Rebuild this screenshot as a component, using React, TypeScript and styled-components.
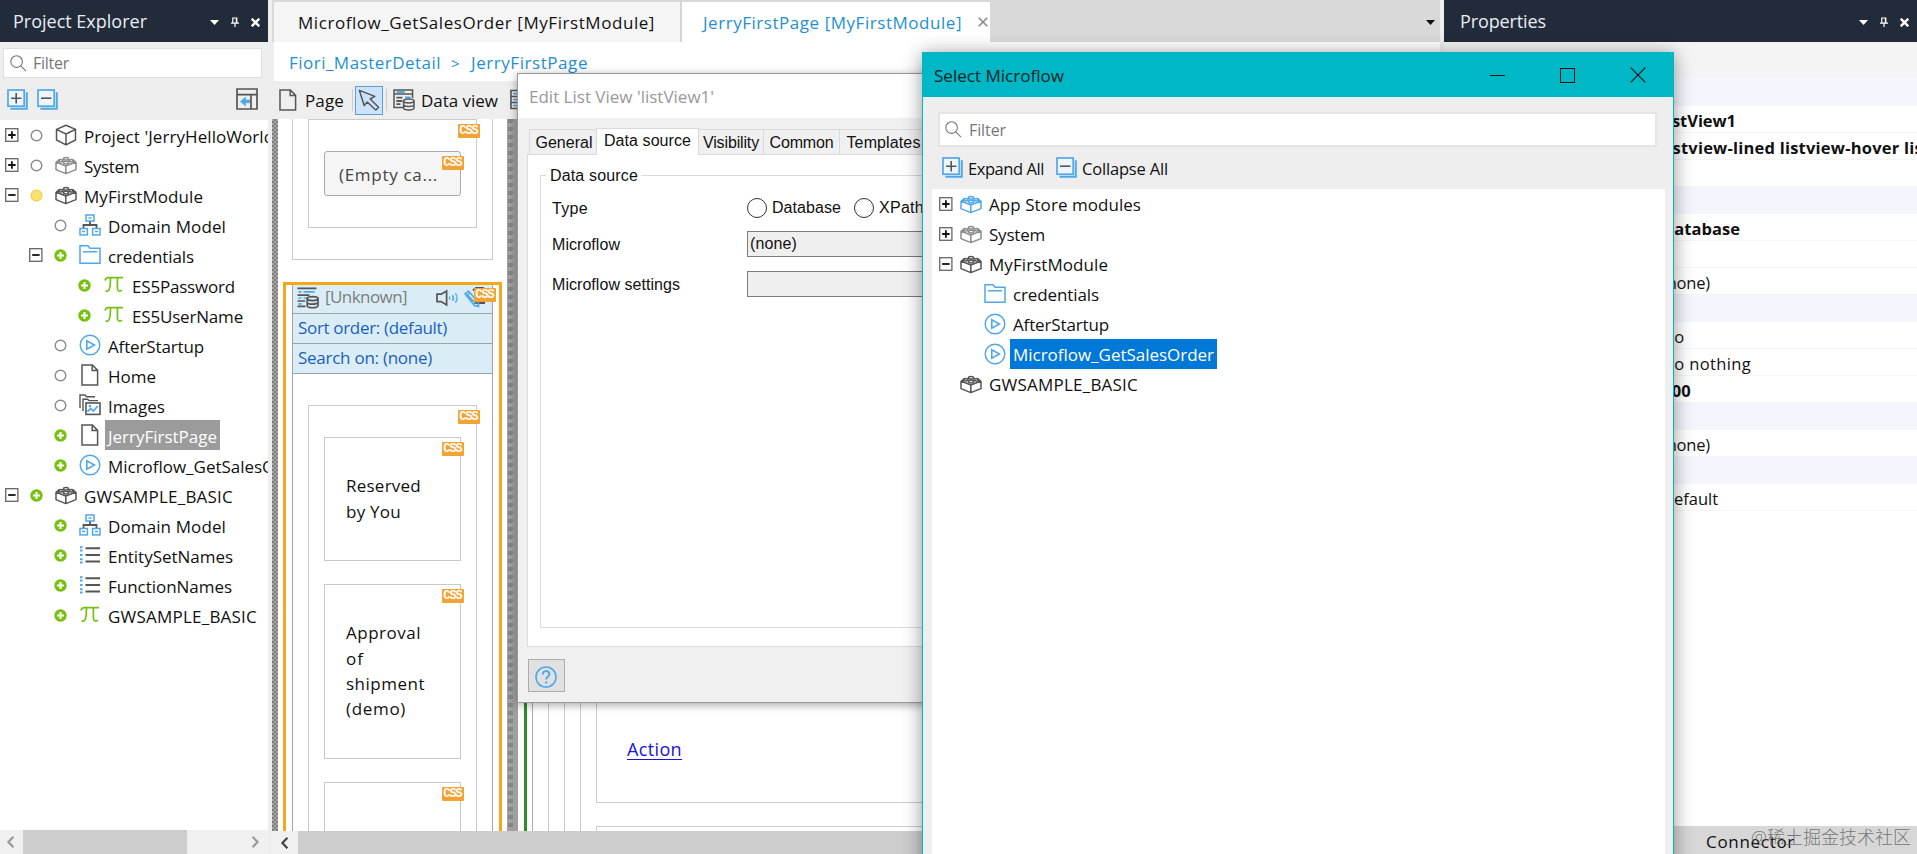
import React, { useLayoutEffect, useRef } from "react";
import styled, { createGlobalStyle, css } from "styled-components";

const UI = `"Open Sans", "Noto Sans", "Noto Sans CJK SC", sans-serif`;
const FORM = `"Liberation Sans", Arial, sans-serif`;

const C = {
  navy: "#222b3a",
  chrome: "#eeeeee",
  teal: "#00b7c5",
  blue: "#1e90d0",
  icon: "#555555",
  sky: "#4fa8e8",
  green: "#76c010",
  orange: "#f5a81c",
  select: "#0078d7",
};

const GlobalStyle = createGlobalStyle`
  html, body { margin: 0; padding: 0; overflow: hidden; }
  * { box-sizing: border-box; }
  body { font-family: ${UI}; font-size: 17px; color: #111; background: #eee; }
  svg { display: block; flex: none; }
`;

/* ---------- text ---------- */

const LabelSpan = styled.span<{ $size: number; $color?: string; $form?: boolean; $bold?: boolean; $dy?: number }>`
  display: inline-block;
  flex: none;
  justify-self: start;
  white-space: pre;
  font-family: ${(p) => (p.$form ? FORM : UI)};
  font-size: ${(p) => p.$size}px;
  font-weight: ${(p) => (p.$bold ? 700 : 400)};
  color: ${(p) => p.$color ?? "#111"};
  padding-top: ${(p) => p.$dy ?? 0}px;
`;

interface LabelProps {
  children: string;
  w?: number;
  size?: number;
  color?: string;
  form?: boolean;
  bold?: boolean;
  dy?: number;
}

/* Tracks its letters so that the label takes the width `w`. */
function Label({ children, w, size = 17, color, form, bold, dy }: LabelProps) {
  const ref = useRef<HTMLSpanElement>(null);
  useLayoutEffect(() => {
    const el = ref.current;
    if (!el || !w) return;
    el.style.letterSpacing = "0px";
    const natural = el.getBoundingClientRect().width;
    el.style.letterSpacing = `${(w - natural) / children.length}px`;
  }, [children, w, size]);
  return (
    <LabelSpan ref={ref} $size={size} $color={color} $form={form} $bold={bold} $dy={dy}>
      {children}
    </LabelSpan>
  );
}

/* ---------- icons ---------- */

const CubeIcon = () => (
  <svg width="22" height="22" viewBox="0 0 22 22" fill="none" stroke={C.icon} strokeWidth="1.5" strokeLinejoin="round">
    <path d="M11 1.2 20.5 5.4V16L11 20.8 1.5 16V5.4ZM1.5 5.4 11 10l9.5-4.6M11 10v10.8" />
  </svg>
);

const BrickIcon = ({ color = C.icon }: { color?: string }) => (
  <svg width="22" height="22" viewBox="0 0 22 22" fill="none" stroke={color} strokeWidth="1.5" strokeLinejoin="round">
    <path d="M1 8v7.6l9.8 4L21 15.6V8M1 8l9.8 4L21 8M10.8 12v7.6M1 8l4-1.8M21 8l-4-1.8" />
    <ellipse cx="11" cy="4.8" rx="2.6" ry="1.3" />
    <ellipse cx="5.6" cy="6.8" rx="2.4" ry="1.2" />
    <ellipse cx="16.4" cy="6.8" rx="2.4" ry="1.2" />
    <ellipse cx="11" cy="8.6" rx="2.6" ry="1.3" />
  </svg>
);

const DomainIcon = () => (
  <svg width="22" height="22" viewBox="0 0 22 22" fill="none" stroke={C.sky} strokeWidth="1.5">
    <rect x="7" y="1" width="8" height="6" />
    <path d="M9.5 4h3M3 17.5h3M16 17.5h3" />
    <path d="M11 7.5v3.5M4.5 14v-3h13v3" stroke={C.icon} strokeWidth="1.8" />
    <rect x="1" y="14.5" width="7.4" height="6.4" />
    <rect x="13.6" y="14.5" width="7.4" height="6.4" />
  </svg>
);

const FolderIcon = () => (
  <svg width="22" height="22" viewBox="0 0 22 22" fill="none" stroke={C.sky} strokeWidth="1.5">
    <path d="M1 19.2V1.8h8l2 2.4h10v15ZM4 7.8h14" />
  </svg>
);

const PiIcon = () => (
  <svg width="22" height="22" viewBox="0 0 22 22" fill="none" stroke={C.green} strokeWidth="1.7">
    <path d="M2 6.5C2.6 4 3.6 3.6 5.4 3.6H20M7.5 3.6c0 6.4-.4 11-1.8 12.6-.8 1-2 1.2-3.2.8M14.4 3.6v10.6c0 2.8 2.4 3.8 4.6 2" />
  </svg>
);

const FlowIcon = () => (
  <svg width="22" height="22" viewBox="0 0 22 22" fill="none" stroke={C.sky} strokeWidth="1.4">
    <circle cx="11" cy="11" r="9.8" />
    <path d="M7.8 6.8v8.4l7.6-4.2Z" strokeWidth="1.6" />
  </svg>
);

const PageIcon = () => (
  <svg width="22" height="22" viewBox="0 0 22 22" fill="none" stroke={C.icon} strokeWidth="1.5">
    <path d="M3 1h10.4L18.6 6.4V21H3ZM13.2 1v5.6h5.4" />
  </svg>
);

const ImagesIcon = () => (
  <svg width="22" height="22" viewBox="0 0 22 22" fill="none" stroke={C.icon} strokeWidth="1.4">
    <path d="M1 14V1h5l1.6 1.8H16M4 17V5.2h4.5L10 6.6h9" />
    <rect x="7" y="9" width="14" height="11.4" strokeWidth="1.6" />
    <path d="m8.5 17.5 3.3-3 2.4 2.6 4.6-5" stroke={C.sky} strokeWidth="1.7" />
    <circle cx="11" cy="12" r=".6" stroke={C.sky} />
  </svg>
);

const ListIcon = () => (
  <svg width="22" height="22" viewBox="0 0 22 22" fill="none" strokeWidth="2">
    <path d="M6.5 4.2H21M6.5 11H21M6.5 17.4H21" stroke={C.icon} />
    <path d="M1 3.2h2.6M1 6.6h2.6M1 11h2.6M1 15.2h2.6M1 18.6h2.6" stroke={C.sky} />
  </svg>
);

const SearchIcon = () => (
  <svg width="17" height="17" viewBox="0 0 17 17" fill="none" stroke="#777" strokeWidth="1.1">
    <circle cx="6.6" cy="6.6" r="5.8" />
    <path d="m10.8 10.8 5.2 5.4" />
  </svg>
);

const StackIcon = ({ minus }: { minus?: boolean }) => (
  <svg width="21" height="21" viewBox="0 0 21 21" fill="none" stroke={C.sky} strokeWidth="1.7">
    <path d="M3.4 19.8h16.4V3.2" strokeWidth="2" />
    <rect x="1" y="1" width="16.2" height="16.2" fill="#eef5fa" />
    <path d={minus ? "M4 9.2h10.4" : "M4 9.2h10.4M9.2 4v10.4"} stroke={C.icon} strokeWidth="1.6" />
  </svg>
);

const DockIcon = () => (
  <svg width="22" height="22" viewBox="0 0 22 22" fill="none" stroke={C.icon} strokeWidth="1.7">
    <path d="M1 1h20v20H1ZM1 6.6h20M15 7v14" />
    <path d="M14 13.4H8" stroke={C.sky} strokeWidth="3.4" />
    <path d="m4 13.4 5.8-5v10Z" fill={C.sky} stroke="none" />
  </svg>
);

const CursorIcon = () => (
  <svg width="22" height="22" viewBox="0 0 22 22" fill="none" stroke={C.icon} strokeWidth="1.5" strokeLinejoin="round">
    <path d="m1.4 1.4 4.8 15.2 3-3.6 8.6 8 2.8-2.8-8.4-8.2 4.6-2.6Z" />
  </svg>
);

const DataViewIcon = () => (
  <svg width="22" height="22" viewBox="0 0 22 22" fill="none" stroke={C.icon} strokeWidth="1.5">
    <path d="M10 18.4H1V1h18.6v8M1 5h18.6" />
    <path d="M3.4 8.6h6M3.4 12h6M3.4 15.2h4" strokeWidth="1.8" />
    <path d="M3.6 3h8M12 8.4h5.6" stroke={C.sky} strokeWidth="2" />
    <ellipse cx="15.8" cy="12" rx="5.2" ry="1.9" fill="#eee" />
    <path d="M10.6 12v7c0 2.6 10.4 2.6 10.4 0v-7M10.6 15.6c0 2.6 10.4 2.6 10.4 0" />
  </svg>
);

const GridIcon = () => (
  <svg width="22" height="22" viewBox="0 0 22 22" fill="none" stroke={C.icon} strokeWidth="1.6">
    <path d="M1 1.5h20v18H1ZM1 7.5h20M1 13.5h20M9 1.5v18" />
    <path d="M3 4.6h4M3 10.6h4M3 16.6h4" stroke={C.sky} />
  </svg>
);

const ListViewIcon = () => (
  <svg width="22" height="22" viewBox="0 0 22 22" fill="none" stroke={C.icon} strokeWidth="1.7">
    <path d="M.5 1.4h19M.5 8.2h12M.5 14h7.6M.5 19.4h8" />
    <path d="M1.5 4.8h3M6.6 4.8h11M1.5 11h3M6.6 11h3M1.5 16.8h3" stroke={C.sky} />
    <ellipse cx="15.6" cy="11.6" rx="5.4" ry="2" fill="#daedf7" />
    <path d="M10.2 11.6v7.2c0 2.6 10.8 2.6 10.8 0v-7.2M10.2 15.2c0 2.6 10.8 2.6 10.8 0" />
  </svg>
);

const SpeakerIcon = () => (
  <svg width="23" height="18" viewBox="0 0 23 18" fill="none" stroke={C.icon} strokeWidth="1.7">
    <path d="M1 5.2h4.2L10.6 2v14l-5.4-3.4H1Z" />
    <path d="M13.6 7.6v2.8M16.4 6.2c1.2 1.6 1.2 4 0 5.6M19.4 4.4c2 2.6 2 6.6 0 9.2" stroke={C.sky} strokeWidth="1.5" />
  </svg>
);

const PencilIcon = () => (
  <svg width="22" height="22" viewBox="0 0 22 22" fill="none" stroke={C.sky} strokeWidth="1.6">
    <path d="M9 3.4 12 1h8M10 16h11" stroke={C.icon} strokeWidth="2" />
    <path d="M1 6.8 4.4 4l9.8 11 .4 4.4-4.2-.8ZM3.8 8.2l8 8.6M1.8 9.4l3.6-3" />
  </svg>
);

const HelpIcon = () => (
  <svg width="22" height="22" viewBox="0 0 22 22" fill="none" stroke={C.sky} strokeWidth="1.6">
    <circle cx="11" cy="11" r="10" />
    <path d="M7.8 8.4c0-4.4 6.6-4.2 6.6-.4 0 2.6-3.2 2.4-3.2 5.6M11.2 15.4v2" strokeWidth="2" />
  </svg>
);

const Chevron = ({ right, color = "#999" }: { right?: boolean; color?: string }) => (
  <svg width="9" height="12" viewBox="0 0 9 12" fill="none" stroke={color} strokeWidth="2.2">
    <path d={right ? "m1.6.8 5 5.2-5 5.2" : "m7.4.8-5 5.2 5 5.2"} />
  </svg>
);

const PinIcon = () => (
  <svg width="8" height="10" viewBox="0 0 8 10" fill="none" stroke="#fff" strokeWidth="1.2">
    <path d="M1.8 6V1h4v5M0 6.2h8M4 6.2V10M5.4 1v5" />
  </svg>
);

const CaretIcon = ({ color = "#fff" }: { color?: string }) => (
  <svg width="9" height="5" viewBox="0 0 9 5">
    <path d="M0 0h9L4.5 5Z" fill={color} />
  </svg>
);

const CrossIcon = ({ size, color, weight }: { size: number; color: string; weight: number }) => (
  <svg width={size} height={size} viewBox={`0 0 ${size} ${size}`} stroke={color} strokeWidth={weight}>
    <path d={`M.7.7 ${size - 0.7} ${size - 0.7}M${size - 0.7}.7.7 ${size - 0.7}`} />
  </svg>
);

/* ---------- tree ---------- */

type Kind = "cube" | "brick" | "brickGray" | "brickBlue" | "domain" | "folder" | "pi" | "flow" | "page" | "images" | "list";

const icons: Record<Kind, React.ReactNode> = {
  cube: <CubeIcon />,
  brick: <BrickIcon />,
  brickGray: <BrickIcon color="#8c8c8c" />,
  brickBlue: <BrickIcon color={C.sky} />,
  domain: <DomainIcon />,
  folder: <FolderIcon />,
  pi: <PiIcon />,
  flow: <FlowIcon />,
  page: <PageIcon />,
  images: <ImagesIcon />,
  list: <ListIcon />,
};

interface Node {
  level: number;
  icon: Kind;
  text: string;
  w: number;
  exp?: "+" | "-";
  status?: "none" | "changed" | "added";
  selected?: boolean;
}

const TreeRow = styled.div<{ $level: number; $first: number }>`
  display: flex;
  align-items: center;
  height: 30px;
  padding-left: ${(p) => p.$first + p.$level * 24}px;
  white-space: nowrap;
`;

const ExpandSlot = styled.div<{ $wide?: boolean }>`
  width: ${(p) => (p.$wide ? 21 : 25)}px;
  flex: none;
`;

const StatusSlot = styled.div`
  width: 25px;
  flex: none;
  margin-left: -0.5px;
  margin-right: 0.5px;
`;

const NodeText = styled.div<{ $bg?: string }>`
  height: 30px;
  margin-left: 4px;
  padding: 0 3px;
  line-height: 30px;
  background: ${(p) => p.$bg ?? "transparent"};
`;

const ExpandBox = ({ mark }: { mark: "+" | "-" }) => (
  <svg width="14" height="14" viewBox="0 0 14 14" fill="#fff" stroke="#666" strokeWidth="1.3">
    <rect x=".7" y=".7" width="12.2" height="12.6" />
    <path d={mark === "+" ? "M3.2 7h7.4M6.9 3.3v7.4" : "M3.2 7h7.4"} stroke="#111" strokeWidth="1.8" />
  </svg>
);

const StatusDot = ({ kind }: { kind: "none" | "changed" | "added" }) => (
  <svg width="13" height="13" viewBox="0 0 13 13" fill="none">
    {kind === "none" && <circle cx="6.5" cy="6.5" r="5.3" stroke="#8a8a8a" strokeWidth="1.4" />}
    {kind === "changed" && <circle cx="6.5" cy="6.5" r="5.4" fill="#ffe173" stroke="#f2cf4a" strokeWidth="1.2" />}
    {kind === "added" && (
      <>
        <circle cx="6.5" cy="6.5" r="6.2" fill={C.green} />
        <path d="M3 6.5h7M6.5 3v7" stroke="#fff" strokeWidth="2.1" />
      </>
    )}
  </svg>
);

function Tree({ nodes, first, withStatus, selectBg }: { nodes: Node[]; first: number; withStatus?: boolean; selectBg: string }) {
  return (
    <>
      {nodes.map((n, i) => (
        <TreeRow key={i} $level={n.level} $first={first}>
          <ExpandSlot $wide={!withStatus}>{n.exp && <ExpandBox mark={n.exp} />}</ExpandSlot>
          {withStatus && <StatusSlot>{n.status && <StatusDot kind={n.status} />}</StatusSlot>}
          {icons[n.icon]}
          <NodeText $bg={n.selected ? selectBg : undefined}>
            <Label w={n.w} dy={withStatus ? 2 : 1} color={n.selected ? "#fff" : undefined}>
              {n.text}
            </Label>
          </NodeText>
        </TreeRow>
      ))}
    </>
  );
}

const projectNodes: Node[] = [
  { level: 0, icon: "cube", text: "Project 'JerryHelloWorld'", w: 194, exp: "+", status: "none" },
  { level: 0, icon: "brickGray", text: "System", w: 55, exp: "+", status: "none" },
  { level: 0, icon: "brick", text: "MyFirstModule", w: 119, exp: "-", status: "changed" },
  { level: 1, icon: "domain", text: "Domain Model", w: 118, status: "none" },
  { level: 1, icon: "folder", text: "credentials", w: 86, exp: "-", status: "added" },
  { level: 2, icon: "pi", text: "ES5Password", w: 103, status: "added" },
  { level: 2, icon: "pi", text: "ES5UserName", w: 111, status: "added" },
  { level: 1, icon: "flow", text: "AfterStartup", w: 96, status: "none" },
  { level: 1, icon: "page", text: "Home", w: 48, status: "none" },
  { level: 1, icon: "images", text: "Images", w: 57, status: "none" },
  { level: 1, icon: "page", text: "JerryFirstPage", w: 109, status: "added", selected: true },
  { level: 1, icon: "flow", text: "Microflow_GetSalesOrder", w: 201, status: "added" },
  { level: 0, icon: "brick", text: "GWSAMPLE_BASIC", w: 149, exp: "-", status: "added" },
  { level: 1, icon: "domain", text: "Domain Model", w: 118, status: "added" },
  { level: 1, icon: "list", text: "EntitySetNames", w: 125, status: "added" },
  { level: 1, icon: "list", text: "FunctionNames", w: 124, status: "added" },
  { level: 1, icon: "pi", text: "GWSAMPLE_BASIC", w: 149, status: "added" },
];

const microflowNodes: Node[] = [
  { level: 0, icon: "brickBlue", text: "App Store modules", w: 152, exp: "+" },
  { level: 0, icon: "brickGray", text: "System", w: 56, exp: "+" },
  { level: 0, icon: "brick", text: "MyFirstModule", w: 119, exp: "-" },
  { level: 1, icon: "folder", text: "credentials", w: 86 },
  { level: 1, icon: "flow", text: "AfterStartup", w: 96 },
  { level: 1, icon: "flow", text: "Microflow_GetSalesOrder", w: 201, selected: true },
  { level: 0, icon: "brick", text: "GWSAMPLE_BASIC", w: 149 },
];

/* ---------- page frame ---------- */

const Screen = styled.div`
  position: relative;
  display: grid;
  grid-template-columns: 272px 1168px 477px;
  width: 1917px;
  height: 854px;
  overflow: hidden;
  background: #eee;
`;

const PanelHeader = styled.header<{ $pad: number }>`
  display: flex;
  align-items: center;
  justify-content: space-between;
  height: 42px;
  flex: none;
  padding: 0 8px 0 ${(p) => p.$pad}px;
  background: ${C.navy};
`;

const HeaderTools = styled.div`
  display: flex;
  align-items: center;
  gap: 12px;
  padding-top: 2px;
`;

function PanelTools() {
  return (
    <HeaderTools>
      <CaretIcon />
      <PinIcon />
      <CrossIcon size={9} color="#fff" weight={2.4} />
    </HeaderTools>
  );
}

/* ---------- project explorer ---------- */

const Explorer = styled.aside`
  display: flex;
  flex-direction: column;
  width: 268px;
  min-width: 0;
  overflow: hidden;
  background: ${C.chrome};
`;

const FilterField = styled.div<{ $large?: boolean }>`
  display: flex;
  align-items: center;
  flex: none;
  background: #fff;
  border: 1px solid #e0e0e0;
  ${(p) =>
    p.$large
      ? css`
          gap: 7px;
          height: 35px;
          margin: 15px 16px 0 15px;
          padding-left: 5px;
          border-width: 2px;
          border-color: #e4e4e4;
        `
      : css`
          gap: 6px;
          height: 30px;
          margin: 6px 6px 0 3px;
          padding-left: 6px;
        `}
`;

const ExplorerTools = styled.div`
  display: flex;
  align-items: center;
  gap: 9px;
  height: 42px;
  flex: none;
  padding: 0 10px 0 7px;
`;

const Spacer = styled.div`
  flex: 1;
`;

const ExplorerTree = styled.div`
  flex: 1;
  min-height: 0;
  overflow: hidden;
  background: #fff;
`;

const ScrollTrack = styled.div<{ $h: number; $left: number }>`
  display: flex;
  align-items: center;
  flex: none;
  height: ${(p) => p.$h}px;
  padding-left: ${(p) => p.$left}px;
  background: #f0f0f0;
`;

const ScrollThumb = styled.div<{ $w?: number; $gap: number }>`
  height: 100%;
  width: ${(p) => (p.$w ? `${p.$w}px` : "auto")};
  flex: ${(p) => (p.$w ? "none" : 1)};
  margin-left: ${(p) => p.$gap}px;
  background: #cdcdcd;
`;

const ThumbEndGap = styled.div`
  width: 64px;
`;

/* ---------- editor ---------- */

const Editor = styled.main`
  display: flex;
  flex-direction: column;
  min-width: 0;
  overflow: hidden;
`;

const TabStrip = styled.div`
  display: flex;
  height: 42px;
  flex: none;
  padding: 2px 0 0 2px;
  background: #d9d9d9;
`;

const DocTab = styled.div<{ $active?: boolean; $w: number; $pad: number }>`
  display: flex;
  align-items: center;
  flex: none;
  width: ${(p) => p.$w}px;
  padding-left: ${(p) => p.$pad}px;
  background: ${(p) => (p.$active ? "#fff" : "#f5f5f5")};
  border-right: ${(p) => (p.$active ? "none" : "2px solid #d5d5d5")};
`;

const TabClose = styled.div`
  margin-left: 16px;
`;

const TabOverflow = styled.div`
  display: flex;
  flex: 1;
  align-items: center;
  justify-content: flex-end;
  padding-right: 5px;
`;

const Breadcrumb = styled.nav`
  display: flex;
  align-items: center;
  gap: 10px;
  height: 39px;
  flex: none;
  margin-left: 2px;
  padding: 2px 0 0 15px;
  background: #fff;
`;

const EditorTools = styled.div`
  display: flex;
  align-items: center;
  height: 38px;
  flex: none;
  padding: 0 0 0 5px;
  background: ${C.chrome};
`;

const ToolSlot = styled.div<{ $ml?: number; $up?: number }>`
  flex: none;
  margin-left: ${(p) => p.$ml ?? 0}px;
  margin-bottom: ${(p) => p.$up ?? 0}px;
`;

const CursorButton = styled.div`
  display: flex;
  align-items: center;
  justify-content: center;
  width: 28px;
  height: 29px;
  margin: 0 3px 0 2px;
  background: #cce4fb;
  border: 1px solid #5c9fd8;
`;

const ToolDivider = styled.div<{ $ml?: number }>`
  width: 1px;
  height: 22px;
  margin-left: ${(p) => p.$ml ?? 0}px;
  background: #ccc;
`;

const Canvas = styled.div`
  display: flex;
  flex: 1;
  min-height: 0;
  overflow: hidden;
  background: #fff;
`;

const CheckStrip = styled.div`
  width: 6px;
  flex: none;
  background: repeating-conic-gradient(#7d7d7d 0 25%, #a8a8a8 0 50%) 0 0 / 4px 4px;
`;

const GrayStrip = styled.div`
  width: 11px;
  flex: none;
  padding-left: 1px;
  background: #a0a0a0;
  &::before {
    content: "";
    display: block;
    width: 5px;
    height: 100%;
    background: repeating-linear-gradient(#858585 0 4px, #a0a0a0 4px 8px);
  }
`;

const PhoneColumn = styled.div`
  display: flex;
  flex-direction: column;
  width: 229px;
  flex: none;
  background: #fff;
  overflow: hidden;
`;

const OuterBox = styled.div`
  height: 141px;
  flex: none;
  margin: 0 14px;
  padding: 0 15px;
  border: 1px solid #ccc;
  border-top: none;
`;

const HeadBox = styled.div`
  position: relative;
  height: 109px;
  padding: 31px 15px 0;
  border: 1px solid #ccc;
`;

const CaptionBox = styled.div`
  position: relative;
  display: flex;
  align-items: center;
  height: 45px;
  padding-left: 14px;
  border: 1px solid #aaa;
  border-radius: 3px;
  background: #f5f5f5;
`;

const Tag = styled.span<{ $top: number; $right: number }>`
  position: absolute;
  top: ${(p) => p.$top}px;
  right: ${(p) => p.$right}px;
  width: 22px;
  height: 14px;
  border-radius: 1px;
  background: #f5a234;
  color: #fff;
  font: 700 12px/15px "Liberation Mono", monospace;
  letter-spacing: -1px;
  text-indent: -1px;
  text-align: center;
`;

const CssTag = ({ top = 4, right = -4 }: { top?: number; right?: number }) => (
  <Tag $top={top} $right={right}>
    CSS
  </Tag>
);

const Selection = styled.div`
  position: relative;
  flex: 1;
  min-height: 0;
  margin: 22px 5px 0 5px;
  padding: 0 6px;
  border: 3px solid ${C.orange};
  border-bottom: none;
  background: #fff;
`;

const ListView = styled.div`
  display: flex;
  flex-direction: column;
  height: 100%;
  border: 1px solid #a0a5a8;
  border-width: 0 1px;
  overflow: hidden;
`;

const ListHeader = styled.div<{ $h: number; $icons?: boolean }>`
  display: flex;
  align-items: center;
  height: ${(p) => p.$h}px;
  flex: none;
  padding-left: ${(p) => (p.$icons ? 4 : 5)}px;
  padding-bottom: 2px;
  background: #daedf7;
  border-bottom: 1px solid #9aa3a8;
`;

const ListBody = styled.div`
  position: relative;
  display: flex;
  flex-direction: column;
  gap: 23px;
  flex: 1;
  min-height: 500px;
  margin: 31px 15px 0;
  padding: 31px 15px 0;
  border: 1px solid #ccc;
`;

const Card = styled.div<{ $h: number }>`
  position: relative;
  display: flex;
  flex-direction: column;
  justify-content: center;
  height: ${(p) => p.$h}px;
  flex: none;
  padding: 0 0 1px 21px;
  border: 1px solid #c9c9c9;
  line-height: 25.3px;
  align-items: flex-start;
`;

const WideColumn = styled.div`
  display: flex;
  flex: 1;
  padding-left: 6px;
  background: #fff;
`;

const GreenRule = styled.div`
  flex: 1;
  display: flex;
  padding-left: 5px;
  border-left: 3px solid #2a8f2a;
`;

const Nest = styled.div<{ $dark?: boolean }>`
  display: flex;
  flex: 1;
  padding-left: 15px;
  border-left: 1px solid ${(p) => (p.$dark ? "#aaa" : "#ccc")};
`;

const NestBody = styled.div`
  display: flex;
  flex-direction: column;
  justify-content: flex-end;
  flex: 1;
`;

const ActionCell = styled.div`
  display: flex;
  align-items: flex-end;
  flex: 1;
  margin-bottom: 23px;
  padding: 0 0 42px 30px;
  border: 1px solid #ccc;
`;

const ActionLink = styled.a`
  border-bottom: 1px solid #1a12d8;
  line-height: 25px;
  height: 23px;
`;

const NextCell = styled.div`
  height: 5px;
  flex: none;
  border: 1px solid #ccc;
  border-bottom: none;
`;

/* ---------- properties ---------- */

const Properties = styled.aside`
  display: flex;
  flex-direction: column;
  min-width: 0;
  margin-left: 4px;
  background: #fff;
`;

const PropTop = styled.div`
  height: 35px;
  flex: none;
  background: #f4f4f4;
`;

const PropRow = styled.div<{ $band?: boolean; $h?: number }>`
  display: flex;
  align-items: center;
  height: ${(p) => p.$h ?? 27}px;
  flex: none;
  padding-left: 218px;
  overflow: hidden;
  background: ${(p) => (p.$band ? "#f3f6fc" : "#fff")};
  border-bottom: 1px solid ${(p) => (p.$band ? "#f3f6fc" : "#f5f5f5")};
`;

const BottomBar = styled.div`
  position: relative;
  display: flex;
  align-items: center;
  height: 28px;
  flex: none;
  padding: 2px 0 0 262px;
  background: #d7d7d7;
`;

const Watermark = styled.div`
  position: absolute;
  right: 6px;
  top: -2px;
  font: 300 18px/26px "Open Sans", "Noto Sans CJK SC", sans-serif;
  white-space: nowrap;
  color: rgba(100, 100, 100, 0.85);
`;

interface Prop {
  text?: string;
  w?: number;
  bold?: boolean;
  band?: boolean;
  h?: number;
}

const props: Prop[] = [
  { band: true, h: 29 },
  { text: "listView1", w: 74, bold: true },
  { text: "listview-lined listview-hover listview-md", w: 340, bold: true },
  { h: 27 },
  { band: true },
  { text: "Database", w: 78, bold: true },
  {},
  { text: "(none)", w: 48 },
  { band: true },
  { text: "No", w: 22 },
  { text: "Do nothing", w: 89 },
  { text: "100", w: 29, bold: true },
  { band: true },
  { text: "(none)", w: 48 },
  { band: true },
  { text: "Default", w: 56 },
];

/* ---------- dialogs ---------- */

const EditDialog = styled.section`
  position: absolute;
  left: 517px;
  top: 73px;
  width: 700px;
  height: 630px;
  display: flex;
  flex-direction: column;
  background: #f0f0f0;
  border: 1px solid #999;
  box-shadow: 0 2px 9px rgba(0, 0, 0, 0.35);
`;

const EditTitle = styled.div`
  display: flex;
  align-items: center;
  height: 44px;
  flex: none;
  padding-left: 11px;
  background: #fff;
`;

const FormTabs = styled.div`
  display: flex;
  align-items: flex-end;
  height: 36px;
  flex: none;
  padding-left: 11px;
`;

const FormTab = styled.div<{ $w: number; $active?: boolean }>`
  display: flex;
  align-items: center;
  justify-content: center;
  flex: none;
  position: relative;
  width: ${(p) => p.$w}px;
  height: ${(p) => (p.$active ? 27 : 25)}px;
  margin-bottom: ${(p) => (p.$active ? -1 : 0)}px;
  padding-bottom: ${(p) => (p.$active ? 2 : 0)}px;
  padding-top: ${(p) => (p.$active ? 0 : 2)}px;
  z-index: ${(p) => (p.$active ? 1 : 0)};
  background: ${(p) => (p.$active ? "#fff" : "#f0f0f0")};
  border: 1px solid #d9d9d9;
  border-bottom: none;
  border-left-width: ${(p) => (p.$active ? 1 : 0)}px;
  &:first-child {
    border-left-width: 1px;
    border-right-width: 0;
    padding-left: 2px;
  }
`;

const FormPage = styled.div`
  height: 493px;
  flex: none;
  margin-left: 9px;
  padding: 20px 0 0 12px;
  background: #fff;
  border: 1px solid #dcdcdc;
`;

const Group = styled.fieldset`
  height: 462px;
  margin: -9px 0 0;
  padding: 5px 0 0 11px;
  border: 1px solid #d8dcdf;
  border-right: none;
`;

const GroupTitle = styled.legend`
  height: 18px;
  margin-left: -6px;
  padding: 0 3px 0 4px;
  line-height: 18px;
`;

const FormRow = styled.div<{ $h: number }>`
  display: grid;
  grid-template-columns: 195px 1fr;
  align-items: center;
  height: ${(p) => p.$h}px;
`;

const Radios = styled.div`
  display: flex;
  align-items: center;
  gap: 5px;
`;

const RadioDot = styled.span<{ $ml?: number }>`
  width: 20px;
  height: 20px;
  flex: none;
  margin-left: ${(p) => p.$ml ?? 0}px;
  border: 1px solid #333;
  border-radius: 50%;
  background: #fff;
`;

const ReadonlyInput = styled.div`
  display: flex;
  align-items: center;
  height: 26px;
  padding-left: 2px;
  background: #efefef;
  border: 1px solid #7a7a7a;
`;

const HelpButton = styled.div`
  display: flex;
  align-items: center;
  justify-content: center;
  width: 37px;
  height: 33px;
  margin: 12px 0 0 10px;
  padding: 2px 1px 0 0;
  background: #e1e1e1;
  border: 1px solid #adadad;
`;

const SelectDialog = styled.section`
  position: absolute;
  left: 922px;
  top: 52px;
  width: 752px;
  height: 830px;
  display: flex;
  flex-direction: column;
  background: ${C.chrome};
  border: 1px solid ${C.teal};
  box-shadow: 0 2px 18px rgba(0, 0, 0, 0.42);
`;

const SelectTitle = styled.div`
  display: flex;
  align-items: center;
  height: 44px;
  flex: none;
  padding: 0 27px 0 11px;
  background: ${C.teal};
`;

const WindowTools = styled.div`
  display: flex;
  align-items: center;
  gap: 55px;
  margin-left: auto;
`;

const MinimizeMark = styled.span`
  width: 15px;
  height: 1px;
  background: #111;
`;

const MaximizeMark = styled.span`
  width: 15px;
  height: 15px;
  border: 1px solid #111;
`;

const SelectTools = styled.div`
  display: flex;
  align-items: center;
  height: 42px;
  flex: none;
  gap: 5px;
  padding: 0 0 1px 19px;
`;

const SelectTree = styled.div`
  flex: 1;
  margin: 0 8px 0 9px;
  background: #fff;
`;

/* ---------- app ---------- */

function ExplorerPanel() {
  return (
    <Explorer>
      <PanelHeader $pad={13}>
        <Label w={134} size={18} color="#e9edf2">Project Explorer</Label>
        <PanelTools />
      </PanelHeader>
      <FilterField>
        <SearchIcon />
        <Label w={36} size={16} color="#777">Filter</Label>
      </FilterField>
      <ExplorerTools>
        <StackIcon />
        <StackIcon minus />
        <Spacer />
        <DockIcon />
      </ExplorerTools>
      <ExplorerTree>
        <Tree nodes={projectNodes} first={5} withStatus selectBg="#9b9b9b" />
      </ExplorerTree>
      <ScrollTrack $h={24} $left={6}>
        <Chevron />
        <ScrollThumb $w={164} $gap={8} />
        <ThumbEndGap />
        <Chevron right />
      </ScrollTrack>
    </Explorer>
  );
}

function EditorPanel() {
  return (
    <Editor>
      <TabStrip>
        <DocTab $w={408} $pad={24}>
          <Label w={357}>Microflow_GetSalesOrder [MyFirstModule]</Label>
        </DocTab>
        <DocTab $active $w={308} $pad={21}>
          <Label w={259} color={C.blue}>JerryFirstPage [MyFirstModule]</Label>
          <TabClose>
            <CrossIcon size={10} color="#888" weight={1.6} />
          </TabClose>
        </DocTab>
        <TabOverflow>
          <CaretIcon color="#111" />
        </TabOverflow>
      </TabStrip>
      <Breadcrumb>
        <Label w={152} color={C.blue}>Fiori_MasterDetail</Label>
        <Label w={10} size={15} color={C.blue}>&gt;</Label>
        <Label w={117} color={C.blue}>JerryFirstPage</Label>
      </Breadcrumb>
      <EditorTools>
        <PageIcon />
        <ToolSlot $ml={6}>
          <Label w={39}>Page</Label>
        </ToolSlot>
        <ToolDivider $ml={8} />
        <CursorButton>
          <CursorIcon />
        </CursorButton>
        <ToolDivider />
        <ToolSlot $ml={6}>
          <DataViewIcon />
        </ToolSlot>
        <ToolSlot $ml={6}>
          <Label w={77}>Data view</Label>
        </ToolSlot>
        <ToolSlot $ml={12}>
          <GridIcon />
        </ToolSlot>
      </EditorTools>
      <Canvas>
        <CheckStrip />
        <PhoneColumn>
          <OuterBox>
            <HeadBox>
              <CaptionBox>
                <Label w={99} dy={2} color="#444">(Empty ca...</Label>
                <CssTag />
              </CaptionBox>
              <CssTag />
            </HeadBox>
          </OuterBox>
          <Selection>
            <ListView>
              <ListHeader $h={29} $icons>
                <ListViewIcon />
                <ToolSlot $ml={6} $up={3}>
                  <Label w={82} color="#7d7d7d">[Unknown]</Label>
                </ToolSlot>
                <ToolSlot $ml={29}>
                  <SpeakerIcon />
                </ToolSlot>
                <ToolSlot $ml={5}>
                  <PencilIcon />
                </ToolSlot>
              </ListHeader>
              <ListHeader $h={30}>
                <Label w={149} color="#1a5fbf">Sort order: (default)</Label>
              </ListHeader>
              <ListHeader $h={30}>
                <Label w={134} color="#1a5fbf">Search on: (none)</Label>
              </ListHeader>
              <ListBody>
                <CssTag />
                <Card $h={124}>
                  <Label w={75}>Reserved</Label>
                  <Label w={55}>by You</Label>
                  <CssTag />
                </Card>
                <Card $h={175}>
                  <Label w={75}>Approval</Label>
                  <Label w={18}>of</Label>
                  <Label w={79}>shipment</Label>
                  <Label w={60}>(demo)</Label>
                  <CssTag />
                </Card>
                <Card $h={124}>
                  <CssTag />
                </Card>
              </ListBody>
            </ListView>
            <CssTag top={3} right={3} />
          </Selection>
        </PhoneColumn>
        <GrayStrip />
        <WideColumn>
          <GreenRule>
            <Nest $dark>
              <Nest>
                <Nest>
                  <Nest>
                    <NestBody>
                      <ActionCell>
                        <ActionLink>
                          <Label w={55} size={18} color="#1a12d8">Action</Label>
                        </ActionLink>
                      </ActionCell>
                      <NextCell />
                    </NestBody>
                  </Nest>
                </Nest>
              </Nest>
            </Nest>
          </GreenRule>
        </WideColumn>
      </Canvas>
      <ScrollTrack $h={23} $left={8}>
        <Chevron color="#444" />
        <ScrollThumb $gap={9} />
      </ScrollTrack>
    </Editor>
  );
}

function PropertiesPanel() {
  return (
    <Properties>
      <PanelHeader $pad={16}>
        <Label w={86} size={18} color="#e9edf2">Properties</Label>
        <PanelTools />
      </PanelHeader>
      <PropTop />
      {props.map((p, i) => (
        <PropRow key={i} $band={p.band} $h={p.h}>
          {p.text && (
            <Label w={p.w} size={16.5} bold={p.bold} dy={2}>
              {p.text}
            </Label>
          )}
        </PropRow>
      ))}
      <Spacer />
      <BottomBar>
        <Label w={89}>Connector</Label>
        <Watermark>@稀土掘金技术社区</Watermark>
      </BottomBar>
    </Properties>
  );
}

function EditListView() {
  return (
    <EditDialog>
      <EditTitle>
        <Label w={185} color="#999">Edit List View 'listView1'</Label>
      </EditTitle>
      <FormTabs>
        <FormTab $w={67}><Label form size={16} w={57}>General</Label></FormTab>
        <FormTab $w={103} $active><Label form size={16} w={87}>Data source</Label></FormTab>
        <FormTab $w={65}><Label form size={16} w={56}>Visibility</Label></FormTab>
        <FormTab $w={76}><Label form size={16} w={64}>Common</Label></FormTab>
        <FormTab $w={88}><Label form size={16} w={74}>Templates</Label></FormTab>
      </FormTabs>
      <FormPage>
        <Group>
          <GroupTitle><Label form size={16} w={88}>Data source</Label></GroupTitle>
          <FormRow $h={37}>
            <Label form size={16} w={36} dy={2}>Type</Label>
            <Radios>
              <RadioDot />
              <Label form size={16} w={69}>Database</Label>
              <RadioDot $ml={8} />
              <Label form size={16} w={45}>XPath</Label>
            </Radios>
          </FormRow>
          <FormRow $h={36}>
            <Label form size={16} w={68} dy={2}>Microflow</Label>
            <ReadonlyInput><Label form size={16} w={47}>(none)</Label></ReadonlyInput>
          </FormRow>
          <FormRow $h={44}>
            <Label form size={16} w={128} dy={2}>Microflow settings</Label>
            <ReadonlyInput />
          </FormRow>
        </Group>
      </FormPage>
      <HelpButton>
        <HelpIcon />
      </HelpButton>
    </EditDialog>
  );
}

function SelectMicroflow() {
  return (
    <SelectDialog>
      <SelectTitle>
        <Label w={130} color="#0c2226">Select Microflow</Label>
        <WindowTools>
          <MinimizeMark />
          <MaximizeMark />
          <CrossIcon size={16} color="#111" weight={1.2} />
        </WindowTools>
      </SelectTitle>
      <FilterField $large>
        <SearchIcon />
        <Label w={37} size={16} dy={1} color="#777">Filter</Label>
      </FilterField>
      <SelectTools>
        <StackIcon />
        <Label w={76} size={16.5} dy={2}>Expand All</Label>
        <ToolSlot $ml={7}>
          <StackIcon minus />
        </ToolSlot>
        <Label w={86} size={16.5} dy={2}>Collapse All</Label>
      </SelectTools>
      <SelectTree>
        <Tree nodes={microflowNodes} first={7} selectBg={C.select} />
      </SelectTree>
    </SelectDialog>
  );
}

export default function App() {
  return (
    <Screen>
      <GlobalStyle />
      <ExplorerPanel />
      <EditorPanel />
      <PropertiesPanel />
      <EditListView />
      <SelectMicroflow />
    </Screen>
  );
}
